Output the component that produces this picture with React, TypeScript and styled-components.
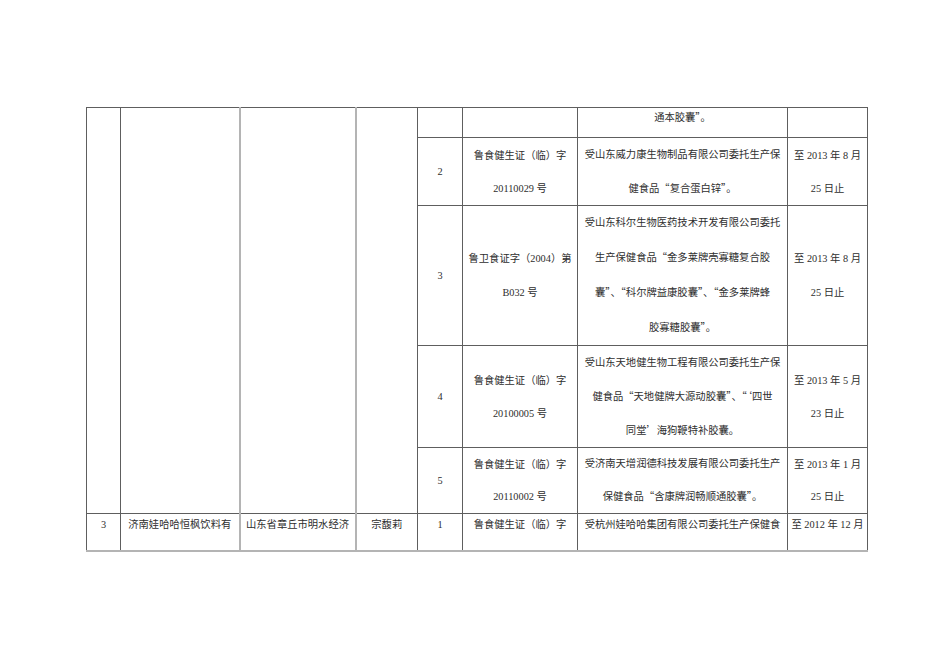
import React from 'react';
import styled, { createGlobalStyle } from 'styled-components';

const GlobalStyle = createGlobalStyle`
  html, body {
    margin: 0;
    padding: 0;
    background: #ffffff;
  }
`;

const Page = styled.div`
  width: 950px;
  height: 672px;
  box-sizing: border-box;
  padding: 107px 0 0 86px;
  background: #ffffff;
  font-family: "Liberation Serif", "Noto Sans CJK SC", serif;
  color: #2e2e2e;
`;

const Table = styled.table`
  width: 781px;
  border-collapse: collapse;
  table-layout: fixed;
  font-size: 10.3px;
`;

const Row = styled.tr<{ h: number; lh?: number }>`
  height: ${p => p.h}px;
  line-height: ${p => p.lh || 33}px;
`;

type Edge = 'dark' | 'light';

const Cell = styled.td<{ left?: Edge; bottom?: Edge; align?: 'top' | 'middle'; lh?: number }>`
  padding: 0;
  text-align: center;
  vertical-align: ${p => p.align || 'middle'};
  ${p => (p.lh ? `line-height: ${p.lh}px;` : '')}
  border-top: 1px solid #5e5e5e;
  border-right: 1px solid #5e5e5e;
  border-bottom: ${p => (p.bottom === 'light' ? '2px solid #b4b4b4' : '1px solid #5e5e5e')};
  border-left: ${p => (p.left === 'light' ? '2px solid #b4b4b4' : '1px solid #5e5e5e')};
  white-space: nowrap;
  overflow: hidden;
`;

const Line = styled.div`
  display: block;
`;

// full-width quotes as in the Song-typeset original
const Quote = styled.span`
  font-family: "Noto Sans CJK SC", sans-serif;
`;

const cols = [34, 119, 116, 62, 45, 115, 210, 80];

const Text: React.FC<{ t: string }> = ({ t }) => (
  <>
    {t.split(/([“”‘’])/).map((part, i) =>
      /[“”‘’]/.test(part) ? <Quote key={i}>{part}</Quote> : part
    )}
  </>
);

const Lines: React.FC<{ text: string[] }> = ({ text }) => (
  <>
    {text.map((t, i) => (
      <Line key={i}>
        <Text t={t} />
      </Line>
    ))}
  </>
);

const entries = [
  {
    h: 67,
    lh: 33,
    no: '2',
    cert: ['鲁食健生证（临）字', '20110029 号'],
    desc: ['受山东威力康生物制品有限公司委托生产保', '健食品“复合蛋白锌”。'],
    date: ['至 2013 年 8 月', '25 日止'],
  },
  {
    h: 137,
    lh: 34,
    no: '3',
    cert: ['鲁卫食证字（2004）第', 'B032 号'],
    desc: [
      '受山东科尔生物医药技术开发有限公司委托',
      '生产保健食品“金多莱牌壳寡糖复合胶',
      '囊”、“科尔牌益康胶囊”、“金多莱牌蜂',
      '胶寡糖胶囊”。',
    ],
    date: ['至 2013 年 8 月', '25 日止'],
  },
  {
    h: 99,
    lh: 33,
    no: '4',
    cert: ['鲁食健生证（临）字', '20100005 号'],
    desc: ['受山东天地健生物工程有限公司委托生产保', '健食品“天地健牌大源动胶囊”、“‘四世', '同堂’海狗鞭特补胶囊。'],
    date: ['至 2013 年 5 月', '23 日止'],
  },
  {
    h: 65,
    lh: 32,
    no: '5',
    cert: ['鲁食健生证（临）字', '20110002 号'],
    desc: ['受济南天增润德科技发展有限公司委托生产', '保健食品“含康牌润畅顺通胶囊”。'],
    date: ['至 2013 年 1 月', '25 日止'],
  },
];

export default function App() {
  return (
    <Page>
      <GlobalStyle />
      <Table>
        <colgroup>
          {cols.map((w, i) => (
            <col key={i} style={{ width: w }} />
          ))}
        </colgroup>
        <tbody>
          <Row h={30} lh={18}>
            <Cell rowSpan={5} />
            <Cell rowSpan={5} />
            <Cell rowSpan={5} left="light" />
            <Cell rowSpan={5} left="light" />
            <Cell />
            <Cell />
            <Cell align="top">
              <Text t="通本胶囊”。" />
            </Cell>
            <Cell />
          </Row>
          {entries.map(e => (
            <Row key={e.no} h={e.h} lh={e.lh}>
              <Cell>{e.no}</Cell>
              <Cell>
                <Lines text={e.cert} />
              </Cell>
              <Cell>
                <Lines text={e.desc} />
              </Cell>
              <Cell>
                <Lines text={e.date} />
              </Cell>
            </Row>
          ))}
          <Row h={37} lh={22}>
            <Cell align="top" bottom="light">3</Cell>
            <Cell align="top" bottom="light">济南娃哈哈恒枫饮料有</Cell>
            <Cell align="top" bottom="light" left="light">山东省章丘市明水经济</Cell>
            <Cell align="top" bottom="light" left="light">宗馥莉</Cell>
            <Cell align="top" bottom="light">1</Cell>
            <Cell align="top" bottom="light">鲁食健生证（临）字</Cell>
            <Cell align="top" bottom="light">受杭州娃哈哈集团有限公司委托生产保健食</Cell>
            <Cell align="top" bottom="light">至 2012 年 12 月</Cell>
          </Row>
        </tbody>
      </Table>
    </Page>
  );
}
